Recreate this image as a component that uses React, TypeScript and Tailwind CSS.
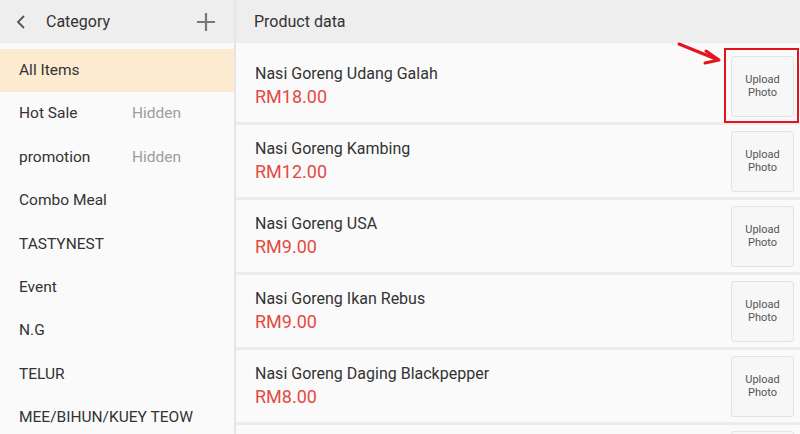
import React from "react";

const categories = [
  { name: "All Items", active: true },
  { name: "Hot Sale", hidden: true },
  { name: "promotion", hidden: true },
  { name: "Combo Meal" },
  { name: "TASTYNEST" },
  { name: "Event" },
  { name: "N.G" },
  { name: "TELUR" },
  { name: "MEE/BIHUN/KUEY TEOW" },
];

const products = [
  { name: "Nasi Goreng Udang Galah", price: "RM18.00" },
  { name: "Nasi Goreng Kambing", price: "RM12.00" },
  { name: "Nasi Goreng USA", price: "RM9.00" },
  { name: "Nasi Goreng Ikan Rebus", price: "RM9.00" },
  { name: "Nasi Goreng Daging Blackpepper", price: "RM8.00" },
  { name: "", price: "" },
];

export default function App() {
  return (
    <div
      className="relative flex w-[800px] h-[434px] overflow-hidden bg-[#fafafa] text-[#333]"
      style={{ fontFamily: "Roboto, 'Liberation Sans', sans-serif" }}
    >
      {/* Category panel */}
      <div className="w-[234px] shrink-0 flex flex-col bg-[#fafafa]">
        <div className="h-[43px] shrink-0 bg-[#eeeeee] flex items-center pl-[16px] pr-[19px]">
          <svg width="10" height="14" viewBox="0 0 10 14" className="mr-[20px]">
            <polyline points="8,1 2,7 8,13" fill="none" stroke="#555" strokeWidth="1.8" />
          </svg>
          <span className="text-[16px] text-[#333]">Category</span>
          <svg width="18" height="18" viewBox="0 0 18 18" className="ml-auto">
            <path d="M9 0 V18 M0 9 H18" stroke="#777" strokeWidth="2.2" />
          </svg>
        </div>
        <div className="pt-[6px] flex flex-col">
          {categories.map((c) => (
            <div
              key={c.name}
              className={`h-[43.4px] shrink-0 flex items-center pl-[19px] text-[15.5px] whitespace-nowrap ${
                c.active ? "bg-[#fdebd1]" : ""
              }`}
            >
              <span className="min-w-[113px] text-[#333]">{c.name}</span>
              {c.hidden && <span className="text-[#9e9e9e]">Hidden</span>}
            </div>
          ))}
        </div>
      </div>

      <div className="w-[2px] shrink-0 bg-[#e6e6e6]" />

      {/* Product panel */}
      <div className="flex-1 flex flex-col">
        <div className="h-[43px] shrink-0 bg-[#eeeeee] flex items-center pl-[18px] text-[16px] text-[#333]">
          Product data
        </div>
        <div className="pt-[7px] flex flex-col">
          {products.map((p, i) => (
            <div
              key={i}
              className="h-[75px] shrink-0 border-b-[3px] border-[#ececec] bg-[#fafafa] flex items-center pl-[19px] pr-[6px]"
            >
              <div className="flex-1 flex flex-col">
                <span className="text-[16px] leading-[21px] text-[#333]">{p.name}</span>
                <span className="text-[18px] leading-[26px] text-[#e24a43]">{p.price}</span>
              </div>
              <div className="w-[63px] h-[61px] rounded-[3px] border border-[#e3e3e3] bg-[#f7f7f7] flex items-center justify-center text-center text-[11px] leading-[13px] text-[#555]">
                {p.name && (
                  <span>
                    Upload
                    <br />
                    Photo
                  </span>
                )}
              </div>
            </div>
          ))}
        </div>
      </div>

      {/* Annotation */}
      <div className="absolute left-[724px] top-[48px] w-[75px] h-[75px] border-2 border-[#e3141c]" />
      <svg className="absolute left-[676px] top-[40px]" width="48" height="26" viewBox="0 0 48 26">
        <line x1="3" y1="4" x2="40" y2="19" stroke="#e3141c" strokeWidth="3" strokeLinecap="round" />
        <polyline points="30,11 43,20 29,23" fill="none" stroke="#e3141c" strokeWidth="3" strokeLinejoin="round" strokeLinecap="round" />
      </svg>
    </div>
  );
}
